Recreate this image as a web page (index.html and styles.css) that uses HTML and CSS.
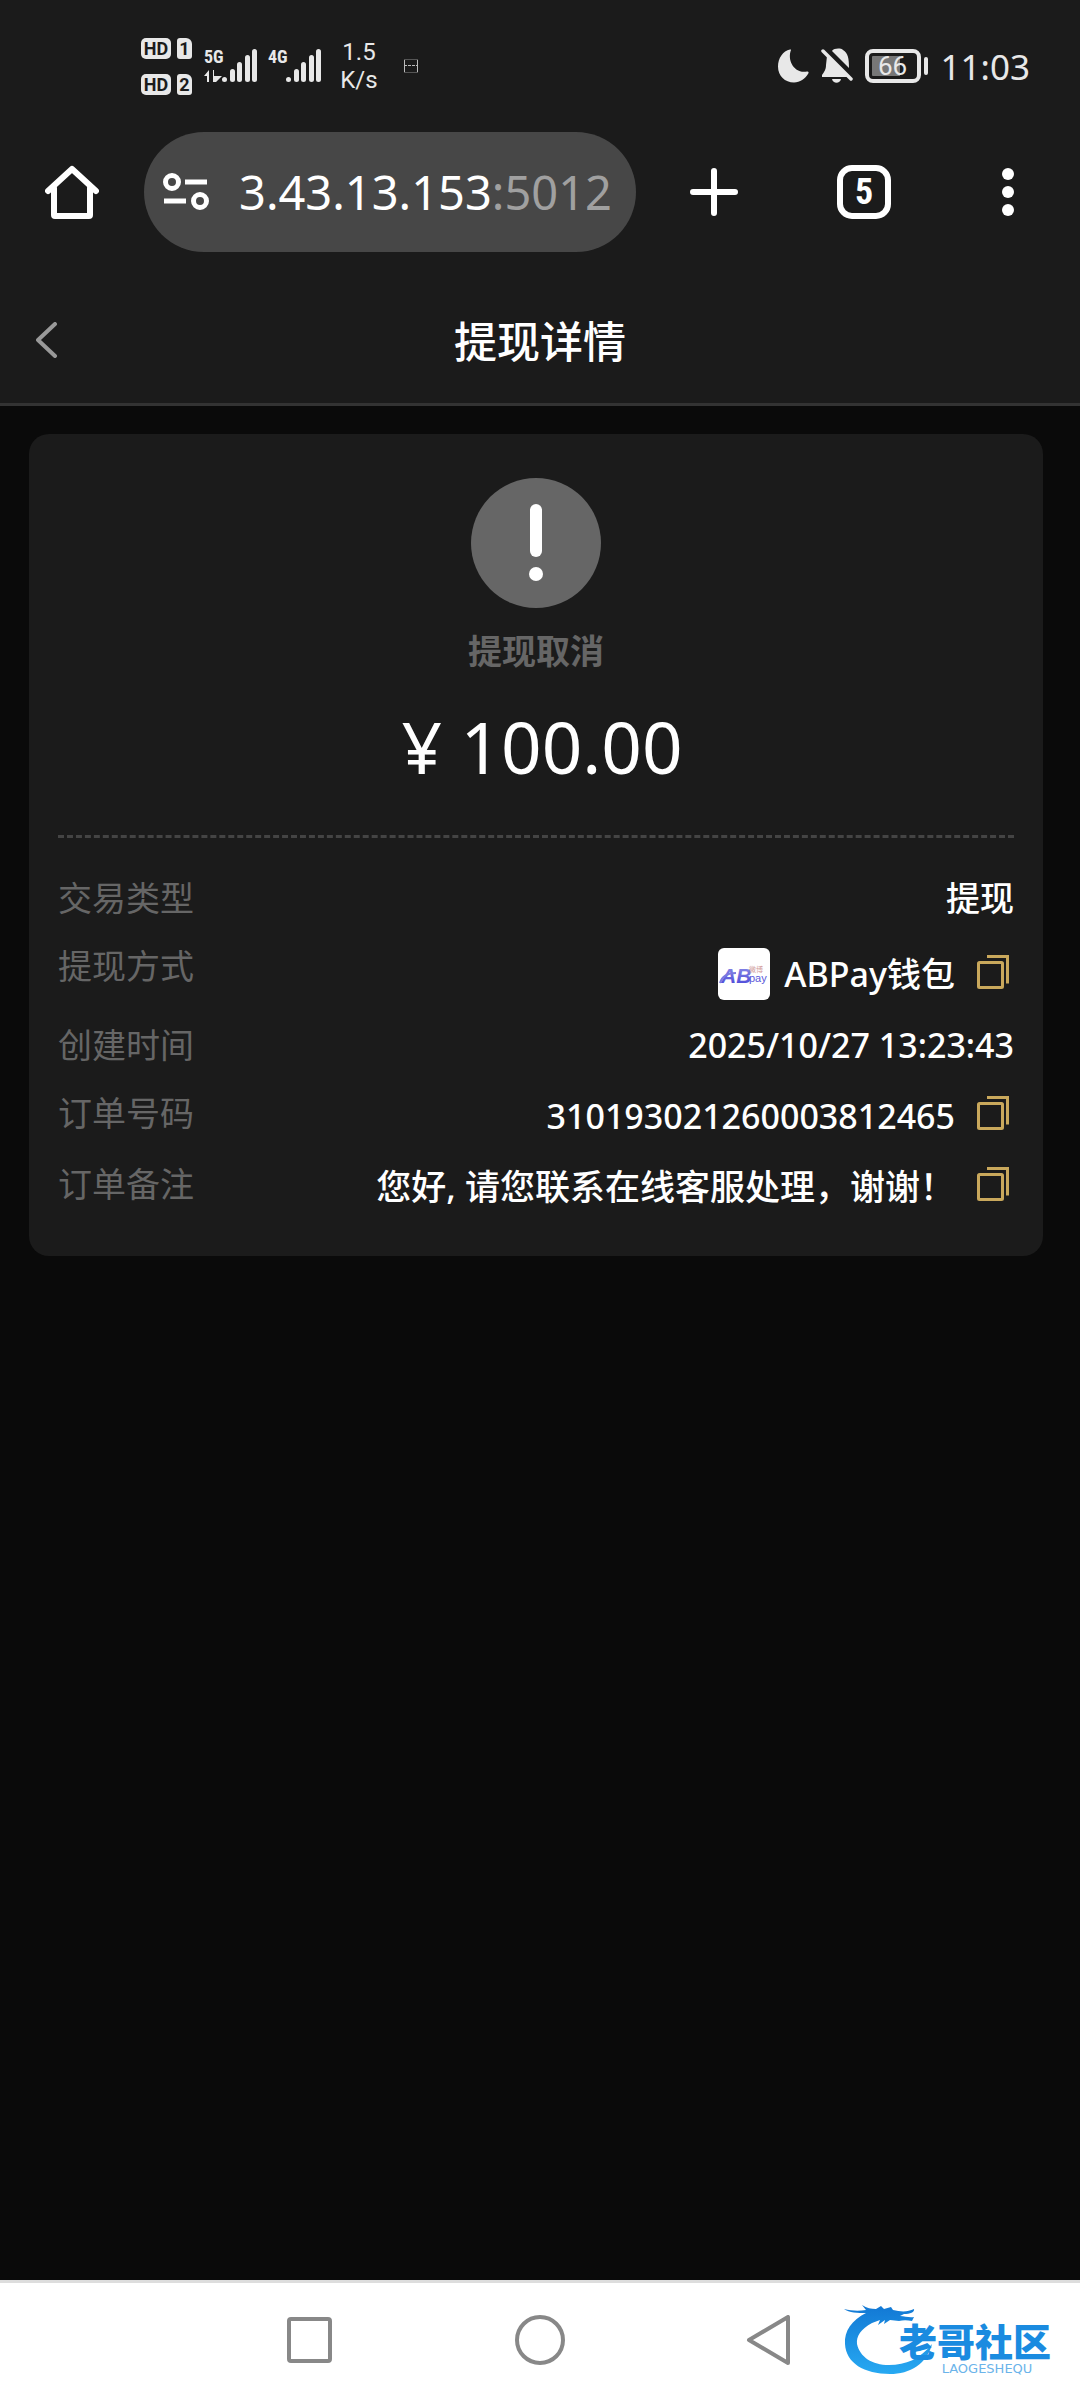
FILE: index.html
```html
<!DOCTYPE html>
<html lang="zh-CN">

<head>
    <meta charset="UTF-8">
    <meta name="viewport" content="width=device-width, initial-scale=1.0">
    <title>提现详情</title>
    <link rel="stylesheet" href="styles.css">
</head>

<body>
    <!-- status bar -->
    <div class="status-bar">
        <div class="status-left">
            <div class="sims">
                <div class="sim"><span class="hd">HD</span><span class="slot">1</span></div>
                <div class="sim"><span class="hd">HD</span><span class="slot">2</span></div>
            </div>
            <svg class="signal" width="54" height="36" viewBox="0 0 54 36" fill="#e8e8e8">
                <text x="0" y="15" class="net">5G</text>
                <path d="M0 28l5-6v12H3v-6zM7 22h3v6h8l-6 6h-3V22z" />
                <rect x="18" y="29" width="5" height="5" rx="2.5" />
                <rect x="26" y="21" width="5" height="13" rx="2.5" />
                <rect x="33" y="14" width="5" height="20" rx="2.5" />
                <rect x="41" y="7" width="5" height="27" rx="2.5" />
                <rect x="48" y="1" width="5" height="33" rx="2.5" />
            </svg>
            <svg class="signal" width="54" height="36" viewBox="0 0 54 36" fill="#e8e8e8">
                <text x="0" y="15" class="net">4G</text>
                <rect x="18" y="29" width="5" height="5" rx="2.5" />
                <rect x="26" y="21" width="5" height="13" rx="2.5" />
                <rect x="33" y="14" width="5" height="20" rx="2.5" />
                <rect x="41" y="7" width="5" height="27" rx="2.5" />
                <rect x="48" y="1" width="5" height="33" rx="2.5" />
            </svg>
            <div class="speed">1.5<br>K/s</div>
            <svg class="notice" width="14" height="14" viewBox="0 0 14 14" fill="none" stroke="#bbb">
                <path d="M.5 0v13M13.5 0v13" />
                <path d="M0 6.500h14" stroke-dasharray="3 1" />
                <path d="M0 .5h14M0 13.500h14" stroke="#555" />
            </svg>
        </div>
        <div class="status-right">
            <svg width="32" height="34" viewBox="0 0 32 34" fill="#e8e8e8">
                <path d="M14 1C10 11 17 25 30 22.500c1.500-.3 2 .8 1.300 2C28 30 23 33.500 17 33.500 8 33.500 1 27 1 17.500 1 9 6 2 13 .5c1-.2 1.300 0 1 .5z" />
            </svg>
            <svg width="32" height="36" viewBox="0 0 32 36">
                <path d="M6 8L5 17c0 5-2 7-4 10v2h26zM11 3c2-3 9-3 11-1 5 3 6 8 6 18z" fill="#e8e8e8" />
                <path d="M11 31h9c-1 5-8 5-9 0z" fill="#e8e8e8" />
                <path d="M4 1l28 28" stroke="#1b1b1b" stroke-width="4" />
                <path d="M2 3l28 28" stroke="#e8e8e8" stroke-width="3.500" stroke-linecap="round" />
            </svg>
            <div class="battery"><span>66</span></div>
            <div class="clock">11:03</div>
        </div>
    </div>

    <!-- browser toolbar -->
    <div class="toolbar">
        <button class="tool" type="button" aria-label="主页">
            <svg width="54" height="54" viewBox="0 0 54 54" fill="none" stroke="#fff" stroke-width="6" stroke-linecap="round" stroke-linejoin="round">
                <path d="M3 26L27 4l24 22M9 23v27q0 1 1 1h34q1 0 1-1V23" />
            </svg>
        </button>
        <button class="address" type="button" aria-label="网址">
            <svg width="46" height="38" viewBox="0 0 46 38" fill="none" stroke="#fff" stroke-width="5">
                <circle cx="9" cy="9" r="6.500" />
                <path d="M22 9h22M1 28h22" />
                <circle cx="37" cy="28" r="6.500" />
            </svg>
            <span class="url"><span>03.43.13.153<span class="port">:5012</span></span></span>
        </button>
        <div class="tools">
            <button class="tool" type="button" aria-label="新建标签页">
                <svg width="48" height="48" viewBox="0 0 48 48" stroke="#fff" stroke-width="6" stroke-linecap="round">
                    <path d="M24 3v42M3 24h42" />
                </svg>
            </button>
            <button class="tool" type="button" aria-label="标签页"><span class="tabs">5</span></button>
            <button class="tool" type="button" aria-label="更多">
                <svg width="12" height="48" viewBox="0 0 12 48" fill="#fff">
                    <circle cx="6" cy="6" r="6" />
                    <circle cx="6" cy="24" r="6" />
                    <circle cx="6" cy="42" r="6" />
                </svg>
            </button>
        </div>
    </div>

    <header class="header">
        <button class="back" type="button" aria-label="返回">
            <svg width="22" height="36" viewBox="0 0 22 36" fill="none" stroke="#999" stroke-width="4" stroke-linecap="round" stroke-linejoin="round">
                <path d="M19 2L2 18l17 16" />
            </svg>
        </button>
        <h1>提现详情</h1>
    </header>

    <main class="content">
        <section class="card">
            <div class="summary">
                <svg width="130" height="130" viewBox="0 0 130 130">
                    <circle cx="65" cy="65" r="65" fill="#666" />
                    <rect x="59" y="26" width="12" height="53" rx="6" fill="#fff" />
                    <circle cx="65" cy="96" r="7" fill="#fff" />
                </svg>
                <p class="state">提现取消</p>
                <p class="amount">¥ 100.00</p>
            </div>
            <dl class="details">
                <div class="row">
                    <dt>交易类型</dt>
                    <dd>提现</dd>
                </div>
                <div class="row method">
                    <dt>提现方式</dt>
                    <dd>
                        <span class="value">
                            <svg class="wallet" width="52" height="52" viewBox="0 0 52 52">
                                <defs>
                                    <linearGradient id="ab" x1="0" y1="0" x2="0" y2="1">
                                        <stop offset="0" stop-color="#8f90e6" />
                                        <stop offset="1" stop-color="#4743d8" />
                                    </linearGradient>
                                </defs>
                                <rect width="52" height="52" rx="6" fill="#fff" />
                                <text x="3" y="35" class="ab" fill="url(#ab)">AB</text>
                                <path d="M2 35c2-7 7-10 16-10" fill="none" stroke="#7a79e0" stroke-width="2" />
                                <text x="31" y="34" class="pay">pay</text>
                                <text x="31" y="24" class="tag">微博</text>
                            </svg>
                            ABPay钱包
                        </span>
                        <button class="copy" type="button" aria-label="复制提现方式">
                            <svg width="33" height="34" viewBox="0 0 33 34" fill="none" stroke="#c9a85c" stroke-width="3">
                                <rect x="1.500" y="7.500" width="24" height="25" rx="1" />
                                <path d="M10 1.500h20.500v27" />
                            </svg>
                        </button>
                    </dd>
                </div>
                <div class="row">
                    <dt>创建时间</dt>
                    <dd>2025/10/27 13:23:43</dd>
                </div>
                <div class="row">
                    <dt>订单号码</dt>
                    <dd>
                        <span class="value">310193021260003812465</span>
                        <button class="copy" type="button" aria-label="复制订单号码">
                            <svg width="33" height="34" viewBox="0 0 33 34" fill="none" stroke="#c9a85c" stroke-width="3">
                                <rect x="1.500" y="7.500" width="24" height="25" rx="1" />
                                <path d="M10 1.500h20.500v27" />
                            </svg>
                        </button>
                    </dd>
                </div>
                <div class="row">
                    <dt>订单备注</dt>
                    <dd>
                        <span class="value note">您好, 请您联系在线客服处理，谢谢！</span>
                        <button class="copy" type="button" aria-label="复制订单备注">
                            <svg width="33" height="34" viewBox="0 0 33 34" fill="none" stroke="#c9a85c" stroke-width="3">
                                <rect x="1.500" y="7.500" width="24" height="25" rx="1" />
                                <path d="M10 1.500h20.500v27" />
                            </svg>
                        </button>
                    </dd>
                </div>
            </dl>
        </section>
    </main>

    <!-- system navigation -->
    <nav class="nav-bar">
        <button type="button" aria-label="最近任务">
            <svg width="50" height="50" viewBox="0 0 50 50" fill="none" stroke="#888" stroke-width="4">
                <rect x="4" y="4" width="41" height="42" rx="2" />
            </svg>
        </button>
        <button type="button" aria-label="主屏幕">
            <svg width="50" height="50" viewBox="0 0 50 50" fill="none" stroke="#888" stroke-width="4">
                <circle cx="25" cy="25" r="23" />
            </svg>
        </button>
        <button type="button" aria-label="后退">
            <svg width="50" height="50" viewBox="0 0 50 50" fill="none" stroke="#888" stroke-width="4" stroke-linejoin="round">
                <path d="M4 25L43 2v46z" />
            </svg>
        </button>
        <div class="watermark">
            <svg class="dragon" width="90" height="72" viewBox="0 0 90 72">
                <defs>
                    <linearGradient id="sea" x1="0" y1="0" x2="0" y2="1">
                        <stop offset="0" stop-color="#1278d4" />
                        <stop offset="1" stop-color="#27a9f2" />
                    </linearGradient>
                </defs>
                <path fill="url(#sea)" d="M0 5c8 2 15 2 22 1l-4-5c5 3 9 4 14 4l5-3 3 3 7-2 2 3c8 2 15 2 21-1 1 3-4 5-10 5l-4 2c5 0 9 2 14 1l-2 4c-5-1-9-1-13 0l-9-1-6 4 1-4-7 5 2-5-8 3C17 25 12 32 13 40c3 13 15 21 32 21 17 0 31-6 43-21-5 20-22 30-42 30C20 70 2 59 1 40 0 27 8 16 22 9 14 9 5 9 0 5z" />
            </svg>
            <div class="brand">
                <strong>老哥社区</strong>
                <small>LAOGESHEQU</small>
            </div>
        </div>
    </nav>
</body>

</html>
```
FILE: styles.css
```css
* {
    box-sizing: border-box;
}

body {
    font-family: "Noto Sans", "Noto Sans CJK SC", sans-serif;
    background-color: #0a0a0a;
    color: #fff;
    margin: 0;
    min-height: 100vh;
    display: flex;
    flex-direction: column;
}

h1, p, dl, dd {
    margin: 0;
}

button {
    padding: 0;
    border: none;
    background: none;
    color: inherit;
    font-family: inherit;
    cursor: pointer;
}

svg {
    display: block;
    flex-shrink: 0;
}

/* status bar */
.status-bar {
    display: flex;
    justify-content: space-between;
    height: 108px;
    padding: 22px 50px 0 141px;
    background: #1b1b1b;
    color: #e8e8e8;
}

.status-left,
.status-right {
    display: flex;
    align-items: center;
    height: 88px;
}

.sims {
    display: flex;
    flex-direction: column;
    gap: 15px;
    margin-right: 12px;
}

.sim {
    display: flex;
    gap: 6px;
}

.hd,
.slot {
    width: 30px;
    height: 21px;
    border-radius: 5px;
    background: #e8e8e8;
    color: #1b1b1b;
    font: bold 18px/21px Roboto, sans-serif;
    text-align: center;
}

.slot {
    width: 15px;
    border-radius: 3px 6px 3px 3px;
}

.signal {
    margin-right: 10px;
    overflow: visible;
}

.net {
    font: bold 18px "Liberation Sans Narrow", "Roboto Condensed", Roboto, sans-serif;
}

.speed {
    width: 50px;
    margin-left: 2px;
    font: 24px/28px Roboto, sans-serif;
    text-align: center;
}

.notice {
    margin-left: 20px;
}

.status-right {
    gap: 12px;
}

.battery {
    position: relative;
    width: 56px;
    height: 34px;
    padding: 3px;
    border: 4px solid #e8e8e8;
    border-radius: 8px;
    background: linear-gradient(90deg, #777 66%, transparent 66%) content-box;
    font: 26px/20px Roboto, sans-serif;
    text-align: center;
}

.battery::after {
    content: "";
    position: absolute;
    top: 4px;
    right: -11px;
    width: 4px;
    height: 18px;
    border-radius: 2px;
    background: #e8e8e8;
}

.clock {
    margin-left: 8px;
    font-size: 35px;
}

/* browser toolbar */
.toolbar {
    display: flex;
    align-items: center;
    height: 168px;
    padding: 0 66px 0 45px;
    background: #1b1b1b;
}

.address {
    display: flex;
    align-items: center;
    flex: 0 1 492px;
    min-width: 0;
    height: 120px;
    margin: 0 54px 0 45px;
    padding: 0 24px 0 19px;
    border-radius: 60px;
    background: #474747;
    font-size: 47px;
}

.url {
    display: flex;
    justify-content: flex-end;
    flex: 1;
    min-width: 0;
    margin-left: 31px;
    overflow: hidden;
    white-space: nowrap;
}

.port {
    color: #a0a0a0;
}

.tools {
    display: flex;
    align-items: center;
    justify-content: space-between;
    flex: 1;
}

.tabs {
    display: block;
    width: 54px;
    height: 54px;
    margin-right: 12px;
    border: 6px solid #fff;
    border-radius: 15px;
    font: bold 36px/42px "Liberation Sans Narrow", "Roboto Condensed", Roboto, sans-serif;
}

/* page header */
.header {
    display: grid;
    grid-template-columns: 60px 1fr 60px;
    align-items: center;
    height: 130px;
    padding: 0 36px;
    background: #1b1b1b;
    border-bottom: 3px solid #333;
}

h1 {
    font-size: 43px;
    font-weight: 500;
    text-align: center;
}

/* details card */
.content {
    flex: 1;
    padding: 28px 37px 28px 29px;
}

.card {
    padding: 44px 29px 46px;
    border-radius: 20px;
    background: #1b1b1b;
}

.summary {
    display: flex;
    flex-direction: column;
    align-items: center;
    padding-bottom: 35px;
    border-bottom: 3px dashed #444;
}

.state {
    margin-top: 20px;
    color: #666;
    font-size: 34px;
    font-weight: bold;
    line-height: 46px;
}

.amount {
    margin: 20px 0 0 12px;
    font-size: 71px;
    line-height: 106px;
}

.details {
    display: flex;
    flex-direction: column;
    gap: 22px;
    padding-top: 37px;
    font-size: 34px;
    line-height: 46px;
}

.row {
    display: flex;
    justify-content: space-between;
}

dt {
    color: #666;
}

dd {
    display: flex;
    align-items: flex-start;
    font-weight: 500;
}

.value {
    display: flex;
    align-items: center;
    gap: 14px;
    padding-top: 3px;
}

.method dd {
    align-items: center;
}

.method .value {
    padding-top: 5px;
}

.note {
    font-size: 35px;
}

.copy {
    width: 37px;
    height: 46px;
    margin-left: 22px;
}

.ab {
    font: italic bold 21px "Liberation Sans", sans-serif;
}

.pay {
    fill: #5b58da;
    font: 11px "Liberation Sans", sans-serif;
}

.tag {
    fill: #d09a9a;
    font: 7px "Noto Sans CJK SC", sans-serif;
}

/* system navigation */
.nav-bar {
    position: relative;
    display: flex;
    justify-content: center;
    height: 120px;
    padding-bottom: 3px;
    border-top: 3px solid #ddd;
    background: #fff;
}

.nav-bar button {
    display: flex;
    align-items: center;
    justify-content: center;
    width: 230px;
}

.watermark {
    position: absolute;
    right: 18px;
    bottom: 24px;
    display: flex;
    align-items: flex-end;
}

.dragon {
    margin-right: -46px;
}

.brand {
    display: flex;
    flex-direction: column;
    align-items: center;
    width: 174px;
}

.brand strong {
    color: #1a8be0;
    font: 900 38px/44px "Noto Sans CJK SC", sans-serif;
}

.brand small {
    margin-left: 24px;
    color: #6bb4ea;
    font: 13px/14px "DejaVu Sans", sans-serif;
}
```
